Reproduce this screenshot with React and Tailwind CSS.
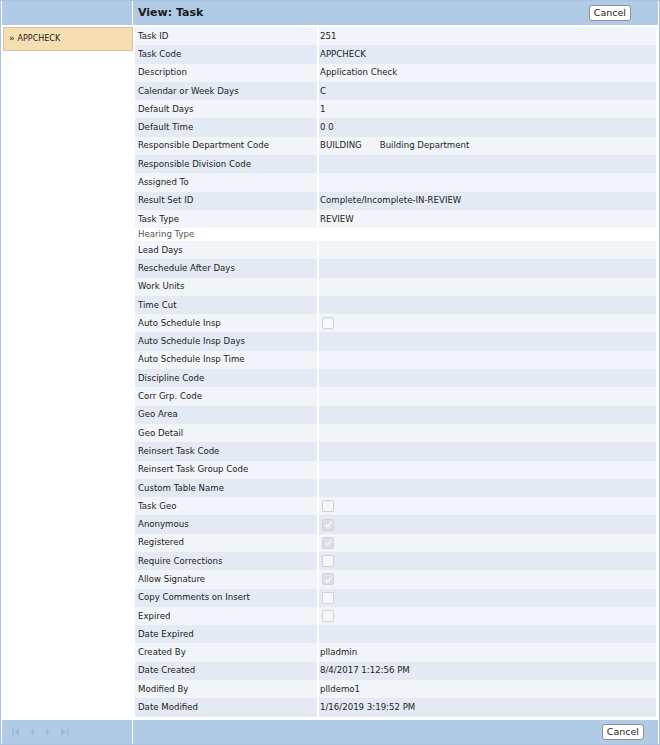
import React from "react";

const rows = [
  { label: "Task ID", value: "251" },
  { label: "Task Code", value: "APPCHECK" },
  { label: "Description", value: "Application Check" },
  { label: "Calendar or Week Days", value: "C" },
  { label: "Default Days", value: "1" },
  { label: "Default Time", value: "0 0" },
  { label: "Responsible Department Code", value: "BUILDING", extra: "Building Department" },
  { label: "Responsible Division Code" },
  { label: "Assigned To" },
  { label: "Result Set ID", value: "Complete/Incomplete-IN-REVIEW" },
  { label: "Task Type", value: "REVIEW" },
  { label: "Hearing Type", plain: true },
  { label: "Lead Days" },
  { label: "Reschedule After Days" },
  { label: "Work Units" },
  { label: "Time Cut" },
  { label: "Auto Schedule Insp", check: false },
  { label: "Auto Schedule Insp Days" },
  { label: "Auto Schedule Insp Time" },
  { label: "Discipline Code" },
  { label: "Corr Grp. Code" },
  { label: "Geo Area" },
  { label: "Geo Detail" },
  { label: "Reinsert Task Code" },
  { label: "Reinsert Task Group Code" },
  { label: "Custom Table Name" },
  { label: "Task Geo", check: false },
  { label: "Anonymous", check: true },
  { label: "Registered", check: true },
  { label: "Require Corrections", check: false },
  { label: "Allow Signature", check: true },
  { label: "Copy Comments on Insert", check: false },
  { label: "Expired", check: false },
  { label: "Date Expired" },
  { label: "Created By", value: "plladmin" },
  { label: "Date Created", value: "8/4/2017 1:12:56 PM" },
  { label: "Modified By", value: "plldemo1" },
  { label: "Date Modified", value: "1/16/2019 3:19:52 PM" },
];

function Checkbox({ checked }) {
  return (
    <span
      className={
        "flex h-[12px] w-[12px] items-center justify-center rounded-[2px] border " +
        (checked ? "border-[#cfd3d8] bg-[#dde0e4]" : "border-[#cdd2d8] bg-[#f7f8fa]")
      }
    >
      {checked && (
        <svg width="9" height="9" viewBox="0 0 9 9">
          <path d="M1.5 4.8 L3.6 6.8 L7.6 2" fill="none" stroke="#f4f5f7" strokeWidth="1.6" />
        </svg>
      )}
    </span>
  );
}

function CancelButton() {
  return (
    <button className="h-[16px] rounded-[3px] border border-[#8d9096] bg-white px-[4px] text-[9.5px] leading-[14px] text-[#222]">
      Cancel
    </button>
  );
}

function NavIcons() {
  const c = "#9fb9d8";
  return (
    <div className="flex items-center pl-[10px]">
      <svg width="7" height="10" viewBox="0 0 7 10">
        <rect x="0" y="1" width="1.6" height="8" fill={c} />
        <path d="M7 1 L2.5 5 L7 9 Z" fill={c} />
      </svg>
      <svg width="5" height="10" viewBox="0 0 5 10" className="ml-[10px]">
        <path d="M5 1.5 L0.5 5 L5 8.5 Z" fill={c} />
      </svg>
      <svg width="5" height="10" viewBox="0 0 5 10" className="ml-[12px]">
        <path d="M0 1.5 L4.5 5 L0 8.5 Z" fill={c} />
      </svg>
      <svg width="8" height="10" viewBox="0 0 8 10" className="ml-[10px]">
        <path d="M0 1 L4.8 5 L0 9 Z" fill={c} />
        <rect x="6.2" y="1" width="1.6" height="8" fill={c} />
      </svg>
    </div>
  );
}

export default function App() {
  return (
    <div
      className="flex h-[745px] w-[660px] flex-col border border-[#a8c2e0] bg-white px-[1px] pb-[0px] text-[#222]"
      style={{ fontFamily: '"DejaVu Sans", Verdana, sans-serif' }}
    >
      {/* title bar */}
      <div className="flex h-[24px] shrink-0">
        <div className="w-[130px] bg-[#b1cbe7]" />
        <div className="ml-[1px] flex flex-1 items-center justify-between bg-[#b1cbe7] pl-[5px] pr-[27px]">
          <span className="text-[11px] font-bold text-[#1a1a1a]">View: Task</span>
          <CancelButton />
        </div>
      </div>

      <div className="flex flex-1 pt-[2px]">
        {/* record list */}
        <div className="w-[131px] pl-[1px]">
          <div className="flex h-[24px] items-center border border-[#d5c29c] bg-[#f5dfb2] pl-[5px] text-[8px] text-[#222]">
            <span className="mr-[3px] text-[9px]">»</span>APPCHECK
          </div>
        </div>

        {/* detail grid */}
        <div className="ml-[2px] flex flex-1 flex-col pr-[2px] text-[8.6px]">
          {rows.map((r, i) =>
            r.plain ? (
              <div key={r.label} className="flex h-[12.7px] items-center pl-[3px] text-[#555]">
                {r.label}
              </div>
            ) : (
              <div key={r.label} className="flex h-[18.3px]">
                <div
                  className={
                    "flex w-[182px] items-center pl-[3px] " +
                    (i % 2 === 0 ? "bg-[#f1f5fa]" : "bg-[#e3eaf3]")
                  }
                >
                  {r.label}
                </div>
                <div
                  className={
                    "ml-[2px] flex flex-1 items-center pl-[1px] " +
                    (i % 2 === 0 ? "bg-[#f1f5fa]" : "bg-[#e3eaf3]")
                  }
                >
                  {r.check !== undefined ? (
                    <span className="ml-[2px]">
                      <Checkbox checked={r.check} />
                    </span>
                  ) : (
                    <>
                      <span>{r.value}</span>
                      {r.extra && <span className="ml-[18px]">{r.extra}</span>}
                    </>
                  )}
                </div>
              </div>
            )
          )}
        </div>
      </div>

      {/* footer bar */}
      <div className="flex h-[24px] shrink-0">
        <div className="flex w-[130px] items-center bg-[#b1cbe7]">
          <NavIcons />
        </div>
        <div className="ml-[1px] flex flex-1 items-center justify-end bg-[#b1cbe7] pr-[14px]">
          <CancelButton />
        </div>
      </div>
    </div>
  );
}
